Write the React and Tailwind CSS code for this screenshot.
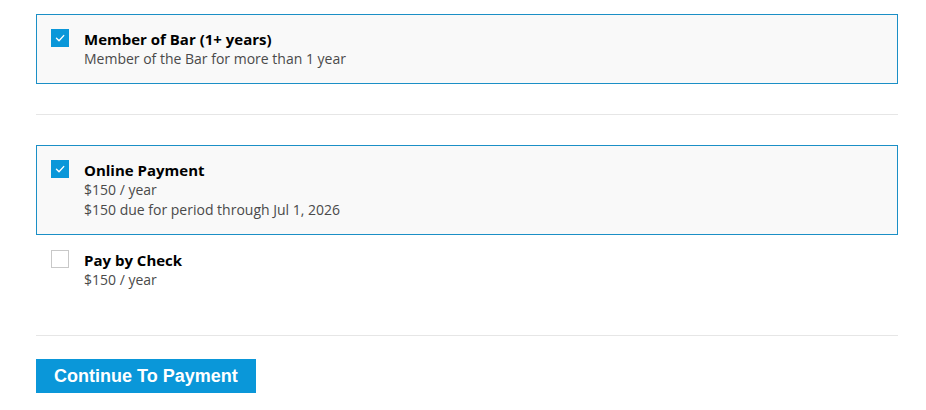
import React from 'react'

const Check = ({ checked }) => (
    <div
        className={
            checked
                ? "w-[18px] h-[18px] shrink-0 bg-[#0a97d9] flex items-center justify-center"
                : "w-[18px] h-[18px] shrink-0 bg-white border border-[#c8c8c8]"
        }
    >
        {checked && (
            <svg width="12" height="12" viewBox="0 0 12 12" fill="none">
                <path d="M2.5 6.3 L5 8.7 L9.7 3.6" stroke="white" strokeWidth="1.4" strokeLinecap="round" strokeLinejoin="round" />
            </svg>
        )}
    </div>
)

const Option = ({ checked, title, lines }) => (
    <div
        className={
            checked
                ? "flex gap-[15px] border border-[#1b8fc6] bg-[#f9f9f9] px-[14px] py-[14px]"
                : "flex gap-[15px] border border-transparent px-[14px] py-[14px]"
        }
    >
        <Check checked={checked} />
        <div>
            <div className="text-[15px] leading-5 font-bold text-black">{title}</div>
            {lines.map((l) => (
                <div key={l} className="text-[14px] leading-5 text-[#4a4a4a]">{l}</div>
            ))}
        </div>
    </div>
)

const App = () => {
    return (
        <div className="bg-white min-h-screen pl-9 pr-7 pt-[14px]" style={{ fontFamily: '"Open Sans", "Noto Sans", sans-serif' }}>

            <Option checked title="Member of Bar (1+ years)" lines={["Member of the Bar for more than 1 year"]} />

            <div className="h-px bg-[#e6e6e6] mt-[30px] mb-[30px]" />

            <Option checked title="Online Payment" lines={["$150 / year", "$150 due for period through Jul 1, 2026"]} />
            <Option title="Pay by Check" lines={["$150 / year"]} />

            <div className="h-px bg-[#e6e6e6] mt-[30px] mb-[23px]" />

            <button
                className="h-[34px] px-[18px] bg-[#0a97d9] text-white text-[18px] font-bold"
                style={{ fontFamily: '"Liberation Sans", Arial, sans-serif' }}
            >
                Continue To Payment
            </button>

        </div>
    )
}

export default App
